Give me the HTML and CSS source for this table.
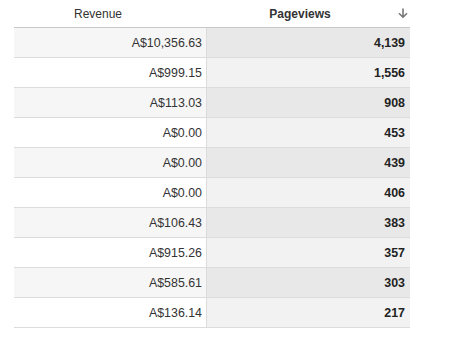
FILE: index.html
```html
<!DOCTYPE html>
<html>
<head>
<meta charset="utf-8">
<link rel="stylesheet" href="styles.css">
</head>
<body>
<div class="table">
  <div class="head">
    <div class="hcell rev">Revenue</div>
    <div class="hcell pv">Pageviews
      <svg class="arrow" width="10" height="10" viewBox="0 0 10 10"><path d="M5 0.5V9M1 5.2L5 9.2L9 5.2" fill="none" stroke="#777" stroke-width="1.6"/></svg>
    </div>
  </div>
  <div class="row odd"><div class="c1">A$10,356.63</div><div class="c2">4,139</div></div>
  <div class="row"><div class="c1">A$999.15</div><div class="c2">1,556</div></div>
  <div class="row odd"><div class="c1">A$113.03</div><div class="c2">908</div></div>
  <div class="row"><div class="c1">A$0.00</div><div class="c2">453</div></div>
  <div class="row odd"><div class="c1">A$0.00</div><div class="c2">439</div></div>
  <div class="row"><div class="c1">A$0.00</div><div class="c2">406</div></div>
  <div class="row odd"><div class="c1">A$106.43</div><div class="c2">383</div></div>
  <div class="row"><div class="c1">A$915.26</div><div class="c2">357</div></div>
  <div class="row odd"><div class="c1">A$585.61</div><div class="c2">303</div></div>
  <div class="row"><div class="c1">A$136.14</div><div class="c2">217</div></div>
</div>
</body>
</html>
```
FILE: styles.css
```css
html, body { margin: 0; padding: 0; background: #fff; }
body { font-family: "Liberation Sans", Arial, sans-serif; font-size: 12px; color: #222; padding-left: 14px; }
.table { width: 396px; }
.head { display: flex; height: 28px; border-bottom: 1px solid #c8c8c8; box-sizing: border-box; }
.hcell { display: flex; align-items: center; justify-content: center; color: #333; padding-top: 1px; box-sizing: border-box; }
.rev { width: 193px; padding-right: 25px; }
.pv { width: 203px; font-weight: bold; padding-right: 17px; position: relative; }
.arrow { position: absolute; right: 2px; top: 8px; }
.row { display: flex; height: 30px; border-bottom: 1px solid #dcdcdc; box-sizing: border-box; font-size: 12.4px; }
.c1, .c2 { display: flex; align-items: center; justify-content: flex-end; box-sizing: border-box; padding-top: 1px; }
.c1 { width: 193px; padding-right: 4px; border-right: 1px solid #dcdcdc; color: #333; }
.c2 { width: 203px; padding-right: 5px; font-weight: bold; background: #f2f2f2; }
.row.odd .c1 { background: #f6f6f6; }
.row.odd .c2 { background: #e8e8e8; }
```
